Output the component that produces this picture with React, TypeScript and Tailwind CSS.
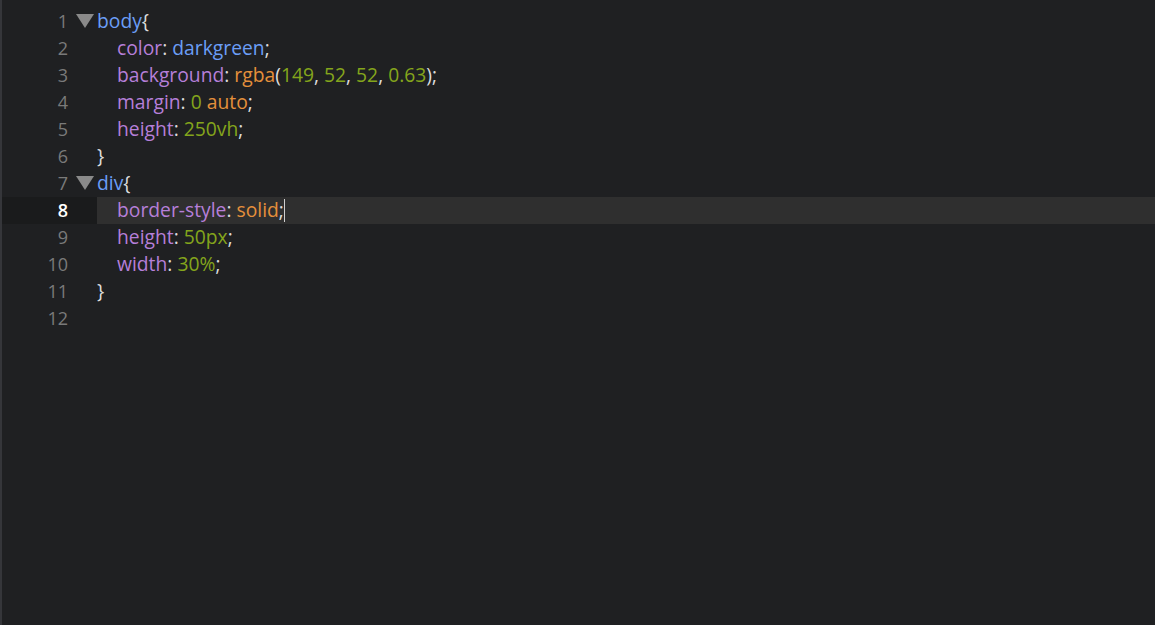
import React from "react";

type Tok = [string, string];

const P = "text-[#b67fd9]"; // property
const B = "text-[#6b9ef7]"; // blue
const O = "text-[#e5903b]"; // orange
const G = "text-[#84a51c]"; // green
const W = "text-[#dcdcdc]"; // punct

const lines: { tokens: Tok[]; indent?: boolean; fold?: boolean }[] = [
  { fold: true, tokens: [["body", B], ["{", W]] },
  { indent: true, tokens: [["color", P], [": ", W], ["darkgreen", B], [";", W]] },
  {
    indent: true,
    tokens: [
      ["background", P],
      [": ", W],
      ["rgba", O],
      ["(", W],
      ["149", G],
      [", ", W],
      ["52", G],
      [", ", W],
      ["52", G],
      [", ", W],
      ["0.63", G],
      [");", W],
    ],
  },
  { indent: true, tokens: [["margin", P], [": ", W], ["0", G], [" ", W], ["auto", O], [";", W]] },
  { indent: true, tokens: [["height", P], [": ", W], ["250vh", G], [";", W]] },
  { tokens: [["}", W]] },
  { fold: true, tokens: [["div", B], ["{", W]] },
  { indent: true, tokens: [["border-style", P], [": ", W], ["solid", O], [";", W]] },
  { indent: true, tokens: [["height", P], [": ", W], ["50px", G], [";", W]] },
  { indent: true, tokens: [["width", P], [": ", W], ["30%", G], [";", W]] },
  { tokens: [["}", W]] },
  { tokens: [] },
];

export default function App() {
  return (
    <div
      className="w-[1155px] h-[625px] bg-[#1f2022] flex overflow-hidden"
      style={{ fontFamily: '"Open Sans", "Noto Sans", sans-serif' }}
    >
      <div className="w-[2px] bg-[#35363a] shrink-0" />
      <div className="flex-1 pt-[8px]">
        {lines.map((l, i) => {
          const active = i === 7;
          return (
            <div key={i} className="flex h-[27px] items-center">
              <div
                className={`w-[95px] h-full flex items-center shrink-0 ${
                  active ? "bg-[#1a1b1c]" : ""
                }`}
              >
                <span
                  className={`w-[66px] text-right text-[18px] ${
                    active ? "text-white font-semibold" : "text-[#7a7a7a]"
                  }`}
                >
                  {i + 1}
                </span>
                <span className="w-[29px] flex">
                  {l.fold && (
                    <svg width="18" height="14" viewBox="0 0 18 14" className="ml-[8px] mb-[2px]">
                      <polygon points="0,0 18,0 9,14" fill="#8a8a8a" />
                    </svg>
                  )}
                </span>
              </div>
              <div
                className={`flex-1 h-full flex items-center whitespace-pre text-[19.3px] ${
                  active ? "bg-[#2f2f2f]" : ""
                }`}
              >
                {l.indent && <span className="inline-block w-[20px]" />}
                {l.tokens.map((t, j) => (
                  <span key={j} className={t[1]}>
                    {t[0]}
                  </span>
                ))}
                {active && <span className="inline-block w-[1px] h-[23px] bg-[#cfcfcf]" />}
              </div>
            </div>
          );
        })}
      </div>
    </div>
  );
}
